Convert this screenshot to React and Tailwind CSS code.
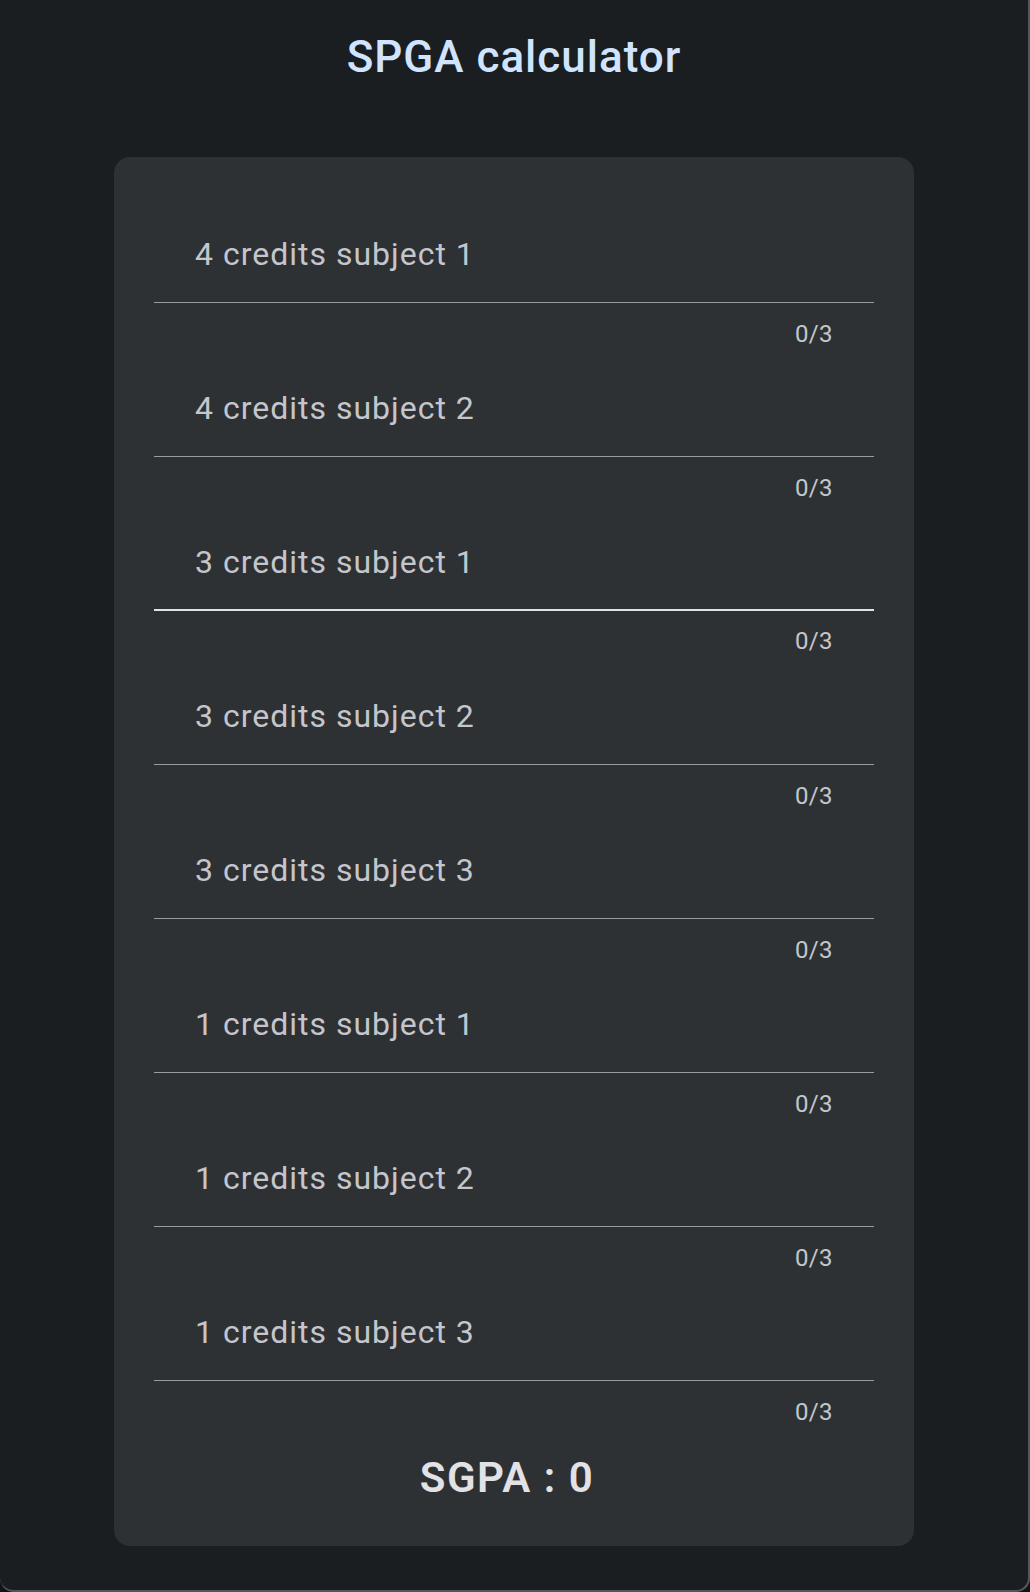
import React from 'react';

const SUBJECTS = [
  '4 credits subject 1',
  '4 credits subject 2',
  '3 credits subject 1',
  '3 credits subject 2',
  '3 credits subject 3',
  '1 credits subject 1',
  '1 credits subject 2',
  '1 credits subject 3',
];

function GradeField({ label, active }) {
  return (
    <div>
      <div
        className={
          'h-[112px] flex items-center pt-[15px] px-[41px] ' +
          (active ? 'border-b-2 border-[#e2e2e6]' : 'border-b border-[#9a9ca2]')
        }
      >
        <span className="text-[32px] leading-[40px] tracking-[1px] text-[#c4c6cc]">{label}</span>
      </div>
      <div className={'h-[42px] flex justify-end px-[41px] ' + (active ? 'pt-[19px]' : 'pt-[20px]')}>
        <span className="text-[24px] leading-[22px] tracking-[0.4px] text-[#c4c6cc]">0/3</span>
      </div>
    </div>
  );
}

export default function App() {
  return (
    <div className="w-[1030px] h-[1592px] bg-[#111315]" style={{ fontFamily: 'Roboto, "Noto Sans", sans-serif' }}>
      <div className="h-[1592px] w-[1030px] bg-[#1b1e21] border-r-2 border-b-2 border-[#55585b] rounded-b-[14px] flex flex-col items-center">
        {/* title */}
        <h1 className="mt-[29px] text-[44px] leading-[56px] font-medium tracking-[1px] text-[#d0e4ff]">
          SPGA calculator
        </h1>

        {/* card */}
        <div className="mt-[72px] w-[800px] h-[1389px] bg-[#2e3134] rounded-[16px] pt-[34px] px-10">
          {SUBJECTS.map((s, i) => (
            <GradeField key={i} label={s} active={i === 2} />
          ))}
          <div className="mt-[31px] pr-[14px] text-center text-[42px] leading-[48px] font-semibold tracking-[1.5px] text-[#e2e2e6]">
            SGPA : 0
          </div>
        </div>
      </div>
    </div>
  );
}
